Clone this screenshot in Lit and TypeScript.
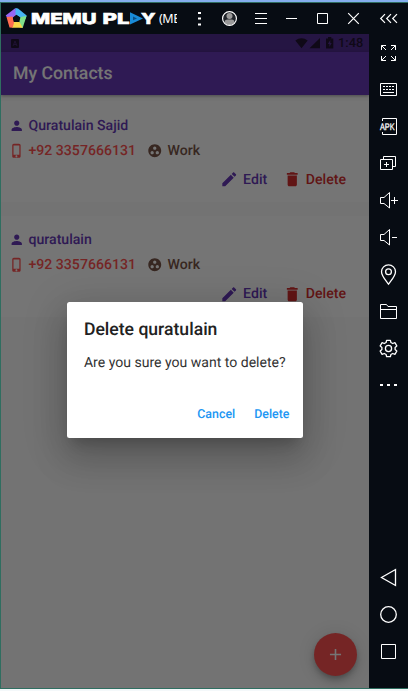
import { LitElement, html, css, svg } from "lit";
import { customElement, property } from "lit/decorators.js";

const material: Record<string, string> = {
  person: "M12 12c2.21 0 4-1.79 4-4s-1.79-4-4-4-4 1.79-4 4 1.79 4 4 4zm0 2c-2.67 0-8 1.34-8 4v2h16v-2c0-2.66-5.33-4-8-4z",
  phone: "M15.5 1h-8C6.12 1 5 2.12 5 3.5v17C5 21.88 6.12 23 7.5 23h8c1.38 0 2.5-1.12 2.5-2.5v-17C18 2.12 16.88 1 15.5 1zm-4 21c-.83 0-1.5-.67-1.5-1.5s.67-1.5 1.5-1.5 1.5.67 1.5 1.5-.67 1.5-1.5 1.5zm4.500-4H7V4h9v14z",
  group: "M12 2C6.480 2 2 6.480 2 12s4.480 10 10 10 10-4.480 10-10S17.520 2 12 2zM8 17.500c-1.380 0-2.500-1.120-2.500-2.500s1.120-2.500 2.500-2.500 2.500 1.120 2.500 2.500-1.120 2.500-2.500 2.500zM9.500 8c0-1.380 1.120-2.500 2.500-2.500s2.500 1.120 2.500 2.500-1.120 2.500-2.500 2.500S9.500 9.380 9.500 8zm6.500 9.500c-1.380 0-2.500-1.120-2.500-2.500s1.120-2.500 2.500-2.500 2.500 1.120 2.500 2.500-1.120 2.500-2.500 2.500z",
  edit: "M3 17.25V21h3.75L17.81 9.940l-3.750-3.750L3 17.250zM20.710 7.040c.39-.39.39-1.020 0-1.410l-2.340-2.340c-.39-.39-1.020-.39-1.410 0l-1.830 1.830 3.750 3.750 1.830-1.830z",
  trash: "M6 19c0 1.100.9 2 2 2h8c1.100 0 2-.9 2-2V7H6v12zM19 4h-3.500l-1-1h-5l-1 1H5v2h14V4z",
  add: "M19 13h-6v6h-2v-6H5v-2h6V5h2v6h6v2z",
};

const tools: Record<string, unknown> = {
  fullscreen: svg`<path d="M12.500 16V11.500H17M12.500 11.500l4.500 4.500M22 11.500h4.500v4.500M26.500 11.500l-4.500 4.500M12.500 22v4.500h4.500M12.500 26.500l4.500-4.500M26.500 22v4.500h-4.500M26.500 26.500l-4.500-4.500"/>`,
  keyboard: svg`<path d="M11.500 12.500h16v12h-16z"/><path d="M14 15.500h11M14 18.500h11" stroke-dasharray="2 1"/><path d="M14 21.500h11"/>`,
  apk: svg`<path d="M13.500 13v-2.500h14v16h-14v-2.500"/><text class="apk" x="11" y="22" textLength="14.500" lengthAdjust="spacingAndGlyphs">APK</text>`,
  windows: svg`<path d="M14.500 14v-2.500h12v10h-2.500M11.500 14.500h12v10h-12zM15 19.500h5M17.500 17v5"/>`,
  louder: svg`<path d="M11.500 15.500h3.500l5.500-5v15.500l-5.500-4.500h-3.500zM22 18.500h7M25.500 15v7"/>`,
  quieter: svg`<path d="M11.500 15.500h3.500l5.500-5v15.500l-5.500-4.500h-3.500zM23 18.500h5"/>`,
  pin: svg`<path stroke-width="1.300" d="M19.500 28.200C17 24.500 12.500 20 12.500 15.700a7 6.800 0 0 1 14 0C26.500 20 22 24.500 19.500 28.200z"/><circle cx="19.500" cy="15.700" r="2.900" stroke-width="1.300"/>`,
  folder: svg`<path d="M11.500 25.500v-14h6l1.500 2h8.500v12zM11.500 16.500h16"/>`,
  gear: svg`<path stroke-width="1.300" stroke-linejoin="round" d="M17.600 10.300h3.800l.5 2.200 1.800 1 2.200-.8 1.900 3.200-1.700 1.500v2.200l1.700 1.500-1.900 3.200-2.200-.8-1.800 1-.5 2.200h-3.800l-.5-2.200-1.800-1-2.200.8-1.900-3.200 1.700-1.500v-2.200l-1.700-1.500 1.900-3.200 2.200.8 1.800-1z"/><circle cx="19.500" cy="18.500" r="3.100" stroke-width="1.300"/>`,
  more: svg`<path stroke-width="2" d="M11 18h3M18 18h3M25 18h3"/>`,
  back: svg`<path stroke-width="1.300" d="M26.500 10.500v16L12.500 18.500z"/>`,
  home: svg`<circle cx="19.500" cy="18.500" r="7.800" stroke-width="1.300"/>`,
  recent: svg`<path d="M12.500 11.500h14v14h-14z"/>`,
};

const controls: unknown[] = [
  svg`<path stroke-width="3" d="M16.500 9v2M16.500 14.500v2M16.500 20.500v2"/>`,
  svg`<circle cx="15.500" cy="15.500" r="5.900" fill="#20242a" stroke="none"/><circle cx="15.500" cy="13" r="3" fill="#999" stroke="none"/><path fill="#999" stroke="none" d="M10.500 19.500q0-3 3-3h4q3 0 3 3-2 2.500-5 2.500t-5-2.500z"/><circle cx="15.500" cy="15.500" r="6.900" stroke-width="1.200"/>`,
  svg`<path d="M10 10.500h12M10 15.500h12M10 20.500h12"/>`,
  svg`<path d="M10 15.500h11"/>`,
  svg`<path d="M10.500 10.500h10v10h-10z"/>`,
  svg`<path stroke-width="1.200" d="M10.200 10.200l10.600 10.600M20.800 10.200l-10.600 10.600"/>`,
];

@customElement("m-icon")
class MIcon extends LitElement {
  @property() name = "";
  static styles = css`
    :host { display: block; flex: none; }
    svg { display: block; width: 100%; height: 100%; fill: currentColor; }
  `;
  render() {
    return html`<svg viewBox="0 0 24 24"><path d=${material[this.name]} /></svg>`;
  }
}

@customElement("contact-card")
class ContactCard extends LitElement {
  @property() name = "";
  @property() phone = "";
  @property() group = "";
  static styles = css`
    :host {
      display: block; height: 101px; box-sizing: border-box; padding: 12px 0 0 7.500px;
      background: #fff; font-size: 14.100px; font-weight: 500;
    }
    .row { display: flex; align-items: center; height: 25px; white-space: nowrap; }
    .small { width: 15.500px; height: 15.500px; margin-right: 4.500px; }
    .name { color: #673ab7; }
    .phone { color: #ff5252; }
    .tag { color: #795548; display: flex; align-items: center; margin-left: 11.500px; }
    .actions { height: 33px; justify-content: flex-end; padding-right: 23px; }
    .edit, .delete { display: flex; align-items: center; }
    .edit { color: #673ab7; margin-right: 15.500px; }
    .delete { color: #d32f2f; }
    .large { width: 18.500px; height: 18.500px; margin-right: 4.700px; }
  `;
  render() {
    return html`
      <div class="row name"><m-icon class="small" name="person"></m-icon>${this.name}</div>
      <div class="row">
        <m-icon class="small phone" name="phone"></m-icon><span class="phone">${this.phone}</span>
        <span class="tag"><m-icon class="small" name="group"></m-icon>${this.group}</span>
      </div>
      <div class="row actions">
        <span class="edit"><m-icon class="large" name="edit"></m-icon>Edit</span>
        <span class="delete"><m-icon class="large" name="trash"></m-icon>Delete</span>
      </div>
    `;
  }
}

@customElement("app-root")
class AppRoot extends LitElement {
  static styles = css`
    :host {
      display: flex; flex-direction: column; box-sizing: border-box; width: 408px; height: 691px;
      overflow: hidden; background: #f4f8fa; font-family: Roboto, sans-serif;
      text-rendering: geometricPrecision;
    }
    .edge { height: 2px; flex: none; background: #84aeee; }
    .window {
      height: 687px; box-sizing: border-box; display: flex; flex-direction: column;
      border: 1px solid #2f6e60; border-right: 0; background: #070c13;
    }
    svg { display: block; flex: none; }
    .line { fill: none; stroke: #fff; stroke-width: 1; }
    .top { display: flex; height: 31px; flex: none; }
    .brand { width: 176px; display: flex; overflow: hidden; margin-right: 6px; }
    .logo { font: 800 15px Inter, sans-serif; fill: #fff; stroke: #fff; stroke-width: 0.600px; }
    .vm { color: #fff; font: 12.500px/32px "Noto Sans", sans-serif; letter-spacing: -0.400px; margin-left: 2px; }
    .main { display: flex; flex: 1; min-height: 0; }
    .phone { width: 368px; position: relative; overflow: hidden; background: #fafafa; }
    .status {
      height: 18px; background: #522e92; display: flex; align-items: center; color: #211432;
      font-size: 12.800px; font-weight: 500; line-height: 16px;
    }
    .clock { margin-top: 2px; }
    .bar {
      height: 43px; box-sizing: border-box; padding-left: 12px; background: #673ab7; color: #fff;
      font-size: 17.700px; font-weight: 500; line-height: 44px; box-shadow: 0 1px 3px rgba(0, 0, 0, 0.35);
    }
    .cards { display: flex; flex-direction: column; gap: 13.500px; padding-top: 6px; }
    .fab {
      position: absolute; right: 12px; bottom: 12px; width: 43px; height: 43px; border-radius: 50%;
      background: #ff5252; color: #fff; display: grid; place-items: center;
      box-shadow: 0 3px 5px -1px rgba(0,0,0,.2), 0 6px 10px rgba(0,0,0,.14), 0 1px 18px rgba(0,0,0,.12);
    }
    .plus { width: 19px; height: 19px; }
    .scrim {
      position: absolute; inset: 0; background: rgba(0, 0, 0, 0.54);
      display: flex; align-items: center; justify-content: center;
    }
    .dialog {
      box-sizing: border-box; width: 235.400px; height: 136px; margin: 18px 0.400px 0 0; border-radius: 2.500px;
      background: #fff; padding: 17px 13px 0 16.800px; color: #212121;
      box-shadow: 0 10px 13px -6px rgba(0,0,0,.2), 0 21px 34px 3px rgba(0,0,0,.14), 0 8px 41px 7px rgba(0,0,0,.12);
    }
    .title { font-size: 17.600px; font-weight: 500; line-height: 22px; white-space: nowrap; }
    .body { font-size: 14.050px; line-height: 20px; margin-top: 11.500px; white-space: nowrap; color: #333; }
    .buttons {
      display: flex; justify-content: flex-end; gap: 19px; margin-top: 34.500px; color: #2196f3;
      font-size: 12.400px; font-weight: 500; line-height: 16px;
    }
    .side { width: 39px; display: flex; flex-direction: column; }
    .push { margin-top: auto; }
    .nav { margin-bottom: 18px; }
    .apk { font: 9.500px "Liberation Sans", sans-serif; fill: #fff; stroke: #fff; stroke-width: 0.300px; }
  `;
  tool(name: string) {
    return html`<svg class="line" width="39" height="37" viewBox="0 0 39 37">${tools[name]}</svg>`;
  }
  render() {
    return html`
      <div class="edge"></div>
      <div class="window">
        <div class="top">
          <div class="brand">
            <svg width="156" height="31" viewBox="1 3 156 31">
              <path fill="#9666f4" d="M15.500 8 5.700 15.500 7.500 18 13 18 17 15z" />
              <path fill="#46b4f4" d="M15.500 8 18 8.500 26.700 15.500 25.500 19 20.500 17.500 15.500 14.500z" />
              <path fill="#7fe08a" d="M26.500 16 22.700 28 19 27 19.500 21 20.500 17z" />
              <path fill="#f9d648" d="M22.700 27.800H12L13 22 19.500 22z" />
              <path fill="#ff6d50" d="M6.500 17 12.500 16.500 14 23 12.500 27.800 9.500 27.500z" />
              <path fill="#070c13" d="M16.300 14.800 20 17.500 18.600 21.800H14.200L12.900 17.500z" />
              <text class="logo" x="31" y="23.500" textLength="65.500" lengthAdjust="spacingAndGlyphs">MEMU</text>
              <text class="logo" x="102.500" y="23.500" textLength="27" lengthAdjust="spacingAndGlyphs">PL</text>
              <path fill="#198bd8" d="M130 12.300 143 18.400 130 24.500z" />
              <path fill="#0b4f85" d="M133 16.500 137 18.400 133 20.300z" />
              <text class="logo" x="141" y="23.500" textLength="14.500" lengthAdjust="spacingAndGlyphs">Y</text>
            </svg>
            <span class="vm">(ME</span>
          </div>
          ${controls.map((c) => html`<svg class="line" width="31" height="31">${c}</svg>`)}
          <svg class="line" width="39" height="31"><path stroke-width="1.200" d="M16 11.200l-4.300 4.300 4.300 4.300M22 11.200l-4.300 4.300 4.300 4.300M28 11.200l-4.300 4.300 4.300 4.300" /></svg>
        </div>
        <div class="main">
          <div class="phone">
            <div class="status">
              <svg width="337" height="18" viewBox="1 34 337 18">
                <rect x="11" y="39" width="8" height="9" rx="1" fill="#211432" />
                <path d="M13 46l2-5 2 5M14 44.500h2" fill="none" stroke="#432670" />
                <path fill="#211432" d="M295.300 40.500q6.200-4.500 12.400 0l-6.200 7.800zM320 38v10.200h-10.500zM326 38.500h2v-1.500h3.300V38.500h2v10H326z" />
                <path fill="#522e92" d="M330.300 40l-2.500 4h1.600v3l2.300-4h-1.400z" />
              </svg>
              <span class="clock">1:48</span>
            </div>
            <div class="bar">My Contacts</div>
            <div class="cards">
              <contact-card name="Quratulain Sajid" phone="+92 3357666131" group="Work"></contact-card>
              <contact-card name="quratulain" phone="+92 3357666131" group="Work"></contact-card>
            </div>
            <div class="fab"><m-icon class="plus" name="add"></m-icon></div>
            <div class="scrim">
              <div class="dialog">
                <div class="title">Delete quratulain</div>
                <div class="body">Are you sure you want to delete?</div>
                <div class="buttons"><span>Cancel</span><span>Delete</span></div>
              </div>
            </div>
          </div>
          <div class="side">
            ${["fullscreen", "keyboard", "apk", "windows", "louder", "quieter", "pin", "folder", "gear", "more"].map((n) => this.tool(n))}
            <div class="push"></div>
            <div class="nav">${["back", "home", "recent"].map((n) => this.tool(n))}</div>
          </div>
        </div>
      </div>
    `;
  }
}
